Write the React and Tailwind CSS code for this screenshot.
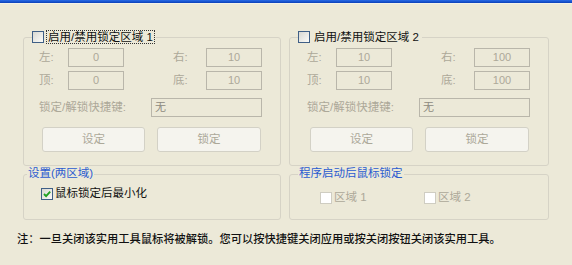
import React from "react";

const FONT = "font-['Liberation_Sans','Noto_Sans_CJK_SC',sans-serif]";

function Box({ checked, disabled }) {
  return (
    <span
      className={
        "flex h-[12px] w-[12px] shrink-0 items-center justify-center border " +
        (disabled
          ? "border-[#cfcdc2] bg-white"
          : "border-[#3f5f86] bg-gradient-to-br from-[#d8d8d2] to-[#fbfbf8]")
      }
    >
      {checked && (
        <svg width="10" height="10" viewBox="0 0 10 10">
          <path d="M2 5 L4.1 7.1 L8.2 2.6" fill="none" stroke="#21a121" strokeWidth="1.9" />
        </svg>
      )}
    </span>
  );
}

function Input({ value, w, left }) {
  return (
    <div
      className={
        "flex h-[19px] items-center border border-[#b9b6aa] bg-[#ece9d8] text-[11px] " +
        w +
        (left ? " justify-start pl-[3px] text-[#8d8a7e]" : " justify-center text-[#aca899]")
      }
    >
      {value}
    </div>
  );
}

function Btn({ children, w }) {
  return (
    <div
      className={
        "flex h-[25px] items-center justify-center rounded-[3px] border border-[#d3d1c6] bg-[#f5f4ee] text-[11.5px] text-[#aca899] " +
        w
      }
    >
      {children}
    </div>
  );
}

function LockGroup({ n, vals, focus, pl }) {
  return (
    <div className={"relative h-[129px] rounded-[3px] border border-[#d6d3c6] pt-[10px] " + pl}>
      <div className="absolute left-[8px] top-[-8px] flex h-[14px] items-center gap-[2px] bg-[#ece9d8] pr-[1px]">
        <Box />
        <span
          className={
            "px-[1px] text-[11.5px] leading-[12px] text-[#111] " +
            (focus ? "border border-dotted border-[#333]" : "border border-transparent")
          }
        >
          启用/禁用锁定区域 {n}
        </span>
      </div>
      <div className="flex flex-col gap-[4px]">
        <div className="flex items-center">
          <span className="w-[29px] text-[11.5px] text-[#aca899]">左:</span>
          <Input value={vals[0]} w="w-[56px]" />
          <span className="ml-[49px] w-[33px] text-[11.5px] text-[#aca899]">右:</span>
          <Input value={vals[1]} w="w-[56px]" />
        </div>
        <div className="flex items-center">
          <span className="w-[29px] text-[11.5px] text-[#aca899]">顶:</span>
          <Input value={vals[2]} w="w-[56px]" />
          <span className="ml-[49px] w-[33px] text-[11.5px] text-[#aca899]">底:</span>
          <Input value={vals[3]} w="w-[56px]" />
        </div>
      </div>
      <div className="mt-[8px] flex items-center">
        <span className="w-[112px] text-[11.5px] text-[#aca899]">锁定/解锁快捷键:</span>
        <Input value="无" w="w-[111px]" left />
      </div>
      <div className="ml-[3px] mt-[10px] flex gap-[12px]">
        <Btn w="w-[103px]">设定</Btn>
        <Btn w="w-[104px]">锁定</Btn>
      </div>
    </div>
  );
}

export default function App() {
  return (
    <div className={"h-[265px] w-[572px] overflow-hidden bg-[#ece9d8] " + FONT}>
      <div className="flex h-[3px]">
        <div className="h-full flex-1 bg-gradient-to-b from-[#2a6ce8] to-[#0a3fb8]" />
      </div>
      <div className="h-[1px] bg-[#f4f2e8]" />
      <div className="flex gap-[8px] pl-[23px] pt-[33px]">
        <div className="flex w-[258px] flex-col gap-[8px]">
          <LockGroup n="1" vals={["0", "10", "0", "10"]} focus pl="pl-[15px]" />
          <div className="relative h-[46px] rounded-[3px] border border-[#d6d3c6] pl-[17px] pt-[12px]">
            <div className="absolute left-[3px] top-[-8px] flex h-[14px] items-center bg-[#ece9d8] px-[1px] text-[11.5px] text-[#2a5bd0]">
              设置(两区域)
            </div>
            <div className="flex h-[14px] items-center gap-[2px]">
              <Box checked />
              <span className="text-[11.5px] text-[#111]">鼠标锁定后最小化</span>
            </div>
          </div>
        </div>
        <div className="flex w-[260px] flex-col gap-[8px]">
          <LockGroup n="2" vals={["10", "100", "10", "100"]} pl="pl-[17px]" />
          <div className="relative flex h-[46px] items-start rounded-[3px] border border-[#d6d3c6] pl-[30px] pt-[16px]">
            <div className="absolute left-[8px] top-[-8px] flex h-[14px] items-center bg-[#ece9d8] px-[1px] text-[11.5px] text-[#2a5bd0]">
              程序启动后鼠标锁定
            </div>
            <div className="flex h-[14px] w-[104px] items-center gap-[2px]">
              <Box disabled />
              <span className="text-[11.5px] text-[#aca899]">区域 1</span>
            </div>
            <div className="flex h-[14px] items-center gap-[2px]">
              <Box disabled />
              <span className="text-[11.5px] text-[#aca899]">区域 2</span>
            </div>
          </div>
        </div>
      </div>
      <div className="mt-[12px] pl-[17px] text-[11.25px] font-medium leading-[14px] text-[#111]">
        注：一旦关闭该实用工具鼠标将被解锁。您可以按快捷键关闭应用或按关闭按钮关闭该实用工具。
      </div>
    </div>
  );
}
